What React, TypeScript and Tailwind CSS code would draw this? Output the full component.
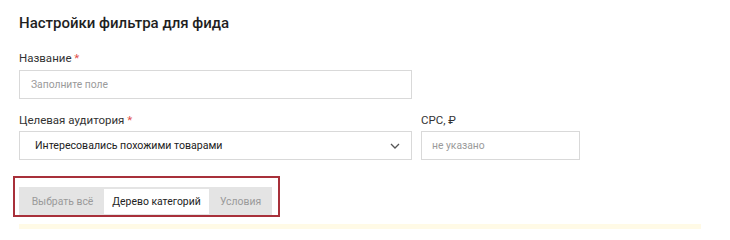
import React from "react";

export default function App() {
  return (
    <div
      className="relative w-[730px] h-[229px] overflow-hidden bg-white pl-[19px] pt-[13px] text-[#222]"
      style={{ fontFamily: 'Roboto, "Noto Sans", sans-serif' }}
    >
      <h1 className="text-[15px] font-medium leading-[20px] text-[#1f1f1f]">
        Настройки фильтра для фида
      </h1>

      <div className="mt-[17px] text-[11.5px] leading-[16px] text-[#333]">
        Название <span className="text-[#e2504a]">*</span>
      </div>
      <div className="mt-[4px] flex h-[29px] w-[393px] items-center border border-[#d9d9d9] bg-white px-[11px] text-[10.3px] text-[#9a9a9a]">
        Заполните поле
      </div>

      <div className="mt-[13px] flex gap-[9px]">
        <div className="flex flex-col">
          <div className="text-[11.5px] leading-[16px] text-[#333]">
            Целевая аудитория <span className="text-[#e2504a]">*</span>
          </div>
          <div className="mt-[3px] flex h-[29px] w-[393px] items-center justify-between border border-[#d9d9d9] bg-white pl-[15px] pr-[11px] text-[10.6px] text-[#222]">
            <span>Интересовались похожими товарами</span>
            <svg width="10" height="6" viewBox="0 0 10 6" fill="none">
              <path d="M1 1l4 4 4-4" stroke="#555" strokeWidth="1.3" />
            </svg>
          </div>
        </div>
        <div className="flex flex-col">
          <div className="text-[11.5px] leading-[16px] text-[#333]">CPC, ₽</div>
          <div className="mt-[3px] flex h-[29px] w-[159px] items-center border border-[#d9d9d9] bg-white px-[10px] text-[10.3px] text-[#9a9a9a]">
            не указано
          </div>
        </div>
      </div>

      <div className="relative mt-[27px] w-fit">
        <div className="flex h-[29px] items-center bg-[#e4e4e4] px-[2px] text-[10.4px]">
          <div className="flex h-[25px] w-[83px] items-center justify-center text-[#9a9a9a]">Выбрать всё</div>
          <div className="flex h-[25px] w-[105px] items-center justify-center bg-white text-[#222]">Дерево категорий</div>
          <div className="flex h-[25px] w-[61px] items-center justify-center pl-[2px] text-[#9a9a9a]">Условия</div>
        </div>
        <div className="pointer-events-none absolute -left-[6px] -top-[11px] -right-[8px] -bottom-[1px] border-2 border-[#a8303a]" />
      </div>

      <div className="mt-[8px] h-[10px] w-[682px] bg-[#fffae6]" />
    </div>
  );
}
